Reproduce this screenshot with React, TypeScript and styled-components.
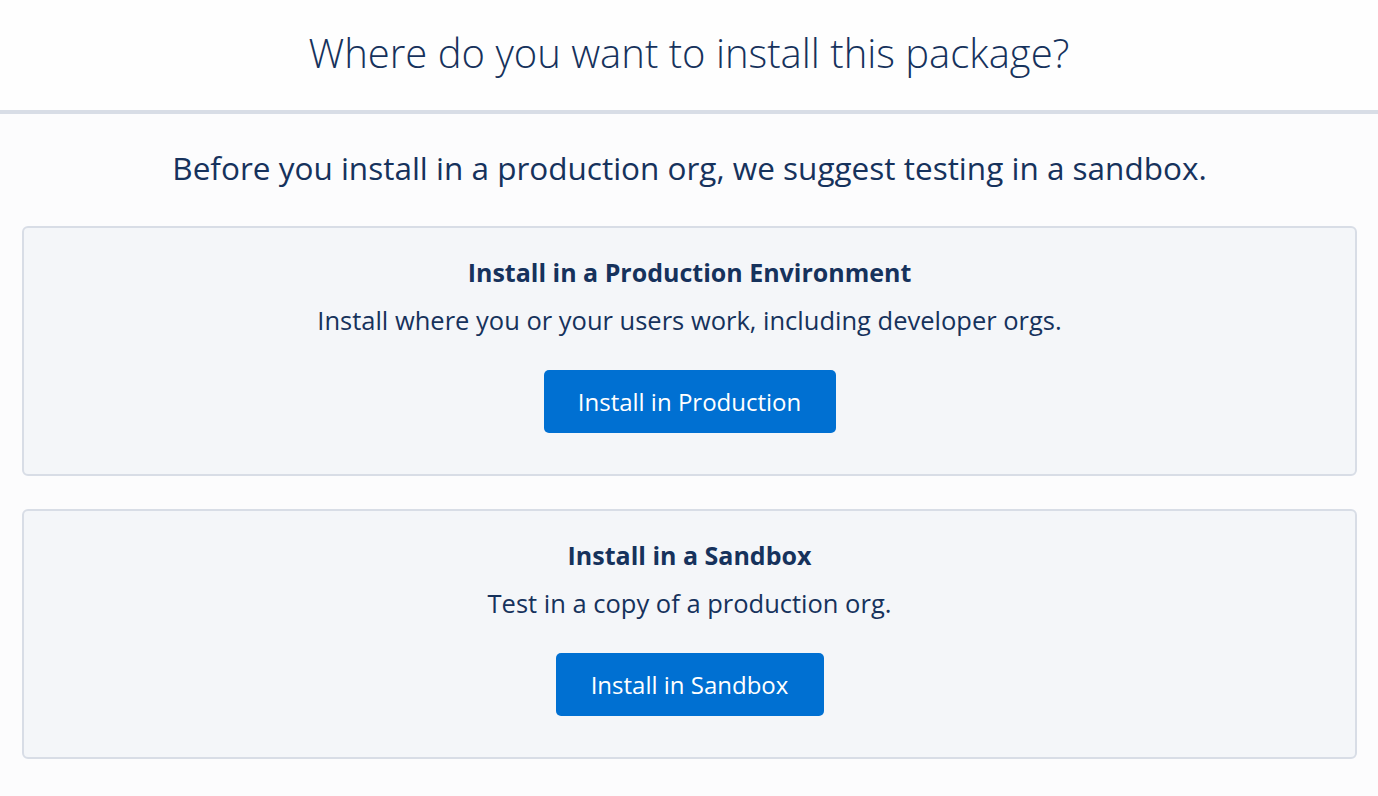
import React from 'react';
import styled, {createGlobalStyle} from 'styled-components';

const GlobalStyle = createGlobalStyle`
    html, body {
        margin: 0;
        padding: 0;
        background: #fcfcfd;
    }
    body {
        font-family: 'Open Sans', 'Liberation Sans', sans-serif;
        color: #16325c;
    }
`;

const Page = styled.div`
    min-height: 796px;
    background: #fcfcfd;
`;

const Header = styled.header`
    height: 110px;
    display: flex;
    align-items: center;
    justify-content: center;
    background: #fefefe;
    border-bottom: 4px solid #d8dde6;
`;

const Title = styled.h1`
    margin: 0 0 6px;
    font-size: 40px;
    font-weight: 300;
    color: #16325c;
`;

const Body = styled.main`
    padding: 32px 21px 0 22px;
    display: flex;
    flex-direction: column;
    gap: 33px;
`;

const Lead = styled.p`
    margin: 0 0 3px;
    text-align: center;
    font-size: 31.5px;
    font-weight: 400;
    line-height: 44px;
`;

const Card = styled.section`
    box-sizing: border-box;
    height: 250px;
    display: flex;
    flex-direction: column;
    align-items: center;
    padding-top: 28px;
    background: #f4f6f9;
    border: 2px solid #d8dde6;
    border-radius: 6px;
`;

const CardTitle = styled.h2`
    margin: 0;
    font-size: 25px;
    font-weight: 700;
    line-height: 32px;
`;

const CardText = styled.p`
    margin: 16px 0 0;
    font-size: 25.5px;
    line-height: 32px;
`;

const Button = styled.button<{$width: number}>`
    margin-top: 34px;
    width: ${(p) => p.$width}px;
    height: 63px;
    border: none;
    border-radius: 5px;
    background: #0070d2;
    color: #ffffff;
    font-family: inherit;
    font-size: 24px;
    cursor: pointer;
`;

const options = [
    {
        title: 'Install in a Production Environment',
        text: 'Install where you or your users work, including developer orgs.',
        button: 'Install in Production',
        width: 292
    },
    {
        title: 'Install in a Sandbox',
        text: 'Test in a copy of a production org.',
        button: 'Install in Sandbox',
        width: 268
    }
];

export default function App() {
    return (
        <Page>
            <GlobalStyle />
            <Header>
                <Title>Where do you want to install this package?</Title>
            </Header>
            <Body>
                <Lead>Before you install in a production org, we suggest testing in a sandbox.</Lead>
                {options.map((o) => (
                    <Card key={o.title}>
                        <CardTitle>{o.title}</CardTitle>
                        <CardText>{o.text}</CardText>
                        <Button $width={o.width}>{o.button}</Button>
                    </Card>
                ))}
            </Body>
        </Page>
    );
}
